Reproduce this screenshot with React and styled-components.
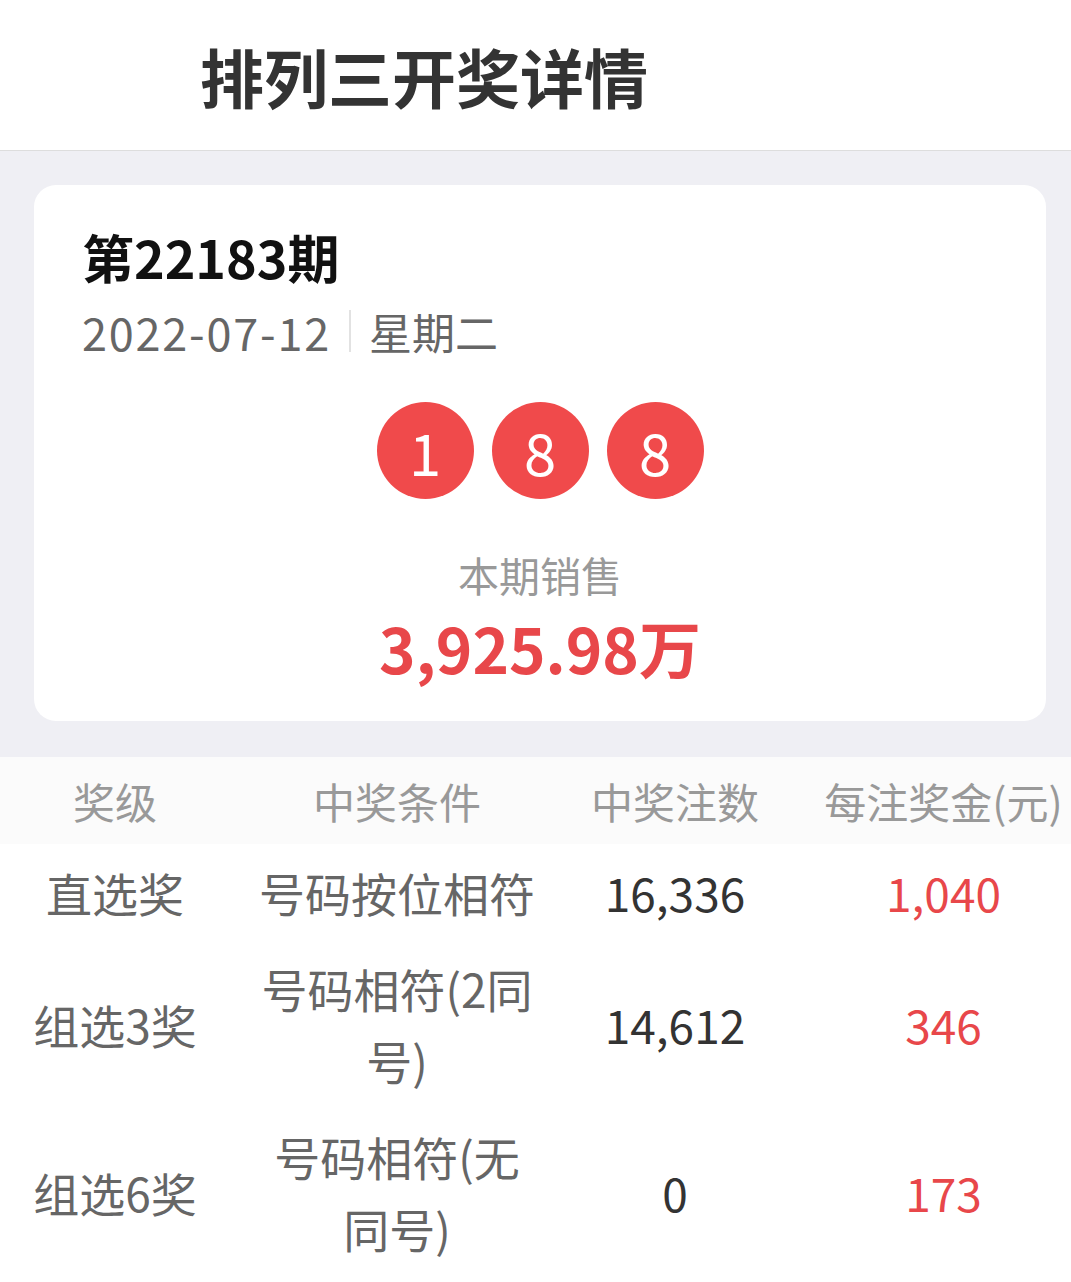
import styled, { createGlobalStyle } from 'styled-components';

const GlobalStyle = createGlobalStyle`
  body {
    margin: 0;
    background: #ffffff;
    font-family: "Noto Sans CJK SC", "Noto Sans", sans-serif;
  }
`;

const Page = styled.div`
  width: 1071px;
  min-height: 1282px;
  background: #ffffff;
`;

const Header = styled.header`
  height: 151px;
  display: flex;
  align-items: center;
  padding-left: 200px;
  border-bottom: 1px solid #dddddd;
  box-sizing: border-box;
`;

const PageTitle = styled.h1`
  margin: 0;
  font-size: 64px;
  font-weight: 700;
  color: #333333;
`;

const GrayArea = styled.div`
  background: #efeff4;
  padding: 34px 25px 36px 34px;
`;

const Card = styled.div`
  background: #ffffff;
  border-radius: 22px;
  padding: 42px 48px 39px;
`;

const Issue = styled.div`
  font-size: 52px;
  line-height: 60px;
  font-weight: 700;
  color: #111111;
`;

const DateRow = styled.div`
  display: flex;
  align-items: center;
  margin-top: 14px;
  height: 60px;
  font-size: 43px;
  color: #666666;
`;

const DateText = styled.span`
  font-size: 45px;
  letter-spacing: 1.8px;
`;

const Divider = styled.span`
  width: 2px;
  height: 42px;
  background: #e2e2e2;
  margin: 0 18px;
`;

const Balls = styled.div`
  display: flex;
  justify-content: center;
  gap: 18px;
  margin-top: 41px;
`;

const Ball = styled.div`
  width: 97px;
  height: 97px;
  border-radius: 50%;
  background: #f04a4b;
  color: #ffffff;
  font-size: 58px;
  display: flex;
  align-items: center;
  justify-content: center;
`;

const SalesLabel = styled.div`
  margin-top: 47px;
  text-align: center;
  font-size: 41px;
  line-height: 56px;
  color: #999999;
`;

const SalesAmount = styled.div`
  margin-top: 10px;
  text-align: center;
  font-size: 62px;
  line-height: 70px;
  font-weight: 700;
  color: #e8474a;
`;

const Row = styled.div`
  display: grid;
  grid-template-columns: 230px 334px 222px 1fr;
  align-items: center;
  background: ${(p) => (p.$head ? '#fbfbfb' : '#ffffff')};
  height: ${(p) => (p.$head ? '87px' : 'auto')};
  padding: ${(p) => (p.$head ? '0' : '12px 0')};
`;

const Cell = styled.div`
  text-align: center;
  font-size: ${(p) => (p.$head ? '42px' : '46px')};
  line-height: ${(p) => (p.$head ? '60px' : '72px')};
  color: ${(p) => p.$color || '#666666'};
  padding: ${(p) => p.$pad || '0'};
`;

const prizes = [
  { level: '直选奖', cond: '号码按位相符', count: '16,336', money: '1,040' },
  { level: '组选3奖', cond: '号码相符(2同号)', count: '14,612', money: '346' },
  { level: '组选6奖', cond: '号码相符(无同号)', count: '0', money: '173' },
];

export default function App() {
  return (
    <Page>
      <GlobalStyle />
      <Header>
        <PageTitle>排列三开奖详情</PageTitle>
      </Header>
      <GrayArea>
        <Card>
          <Issue>第22183期</Issue>
          <DateRow>
            <DateText>2022-07-12</DateText>
            <Divider />
            <span>星期二</span>
          </DateRow>
          <Balls>
            {['1', '8', '8'].map((n, i) => (
              <Ball key={i}>{n}</Ball>
            ))}
          </Balls>
          <SalesLabel>本期销售</SalesLabel>
          <SalesAmount>3,925.98万</SalesAmount>
        </Card>
      </GrayArea>
      <Row $head>
        <Cell $head $color="#999999">奖级</Cell>
        <Cell $head $color="#999999">中奖条件</Cell>
        <Cell $head $color="#999999">中奖注数</Cell>
        <Cell $head $color="#999999" $pad="0 0 0 30px">每注奖金(元)</Cell>
      </Row>
      {prizes.map((p) => (
        <Row key={p.level}>
          <Cell>{p.level}</Cell>
          <Cell $pad="0 24px">{p.cond}</Cell>
          <Cell $color="#333333">{p.count}</Cell>
          <Cell $color="#e8474a" $pad="0 0 0 30px">{p.money}</Cell>
        </Row>
      ))}
    </Page>
  );
}
